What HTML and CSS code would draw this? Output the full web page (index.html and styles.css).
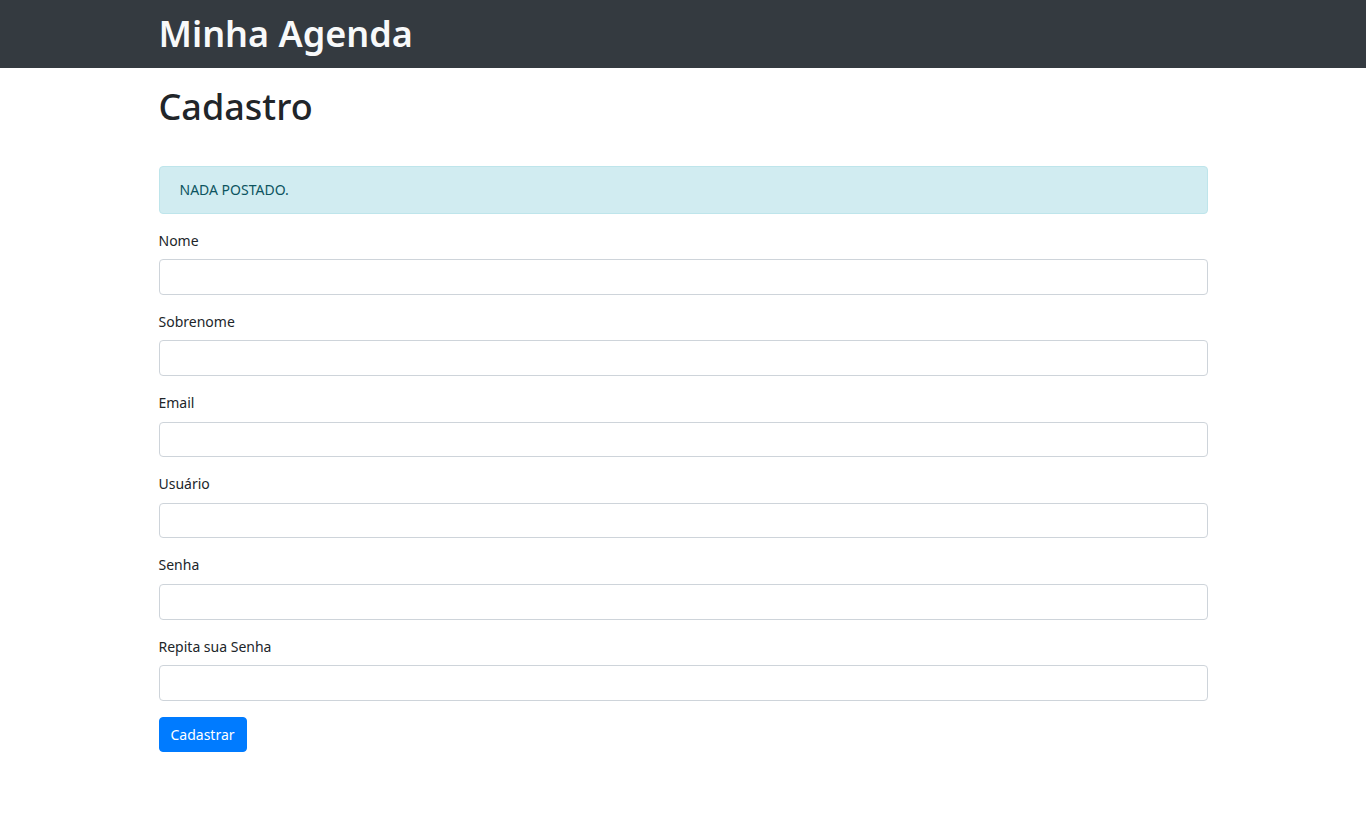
FILE: index.html
```html
<!DOCTYPE html>
<html lang="pt-BR">
<head>
<meta charset="utf-8">
<title>Minha Agenda</title>
<link rel="stylesheet" href="styles.css">
</head>
<body>
<nav class="navbar">
  <div class="container">
    <a class="brand" href="#">Minha Agenda</a>
  </div>
</nav>
<main class="container">
  <h1 class="page-title">Cadastro</h1>
  <div class="alert">NADA POSTADO.</div>
  <form class="form">
    <div class="form-group">
      <label for="nome">Nome</label>
      <input type="text" id="nome" class="form-control">
    </div>
    <div class="form-group">
      <label for="sobrenome">Sobrenome</label>
      <input type="text" id="sobrenome" class="form-control">
    </div>
    <div class="form-group">
      <label for="email">Email</label>
      <input type="email" id="email" class="form-control">
    </div>
    <div class="form-group">
      <label for="usuario">Usuário</label>
      <input type="text" id="usuario" class="form-control">
    </div>
    <div class="form-group">
      <label for="senha">Senha</label>
      <input type="password" id="senha" class="form-control">
    </div>
    <div class="form-group">
      <label for="senha2">Repita sua Senha</label>
      <input type="password" id="senha2" class="form-control">
    </div>
    <button type="submit" class="btn">Cadastrar</button>
  </form>
</main>
</body>
</html>
```
FILE: styles.css
```css
* { box-sizing: border-box; }
html, body { margin: 0; padding: 0; }
body {
  font-family: "Noto Sans", "Open Sans", sans-serif;
  font-size: 14px;
  line-height: 21.6px;
  color: #212529;
  background: #fff;
}
.container {
  width: 1049px;
  margin: 0 auto;
}
.navbar {
  background: #343a40;
  height: 68px;
  display: flex;
  align-items: center;
}
.brand {
  display: block;
  color: #f8f9fa;
  text-decoration: none;
  font-size: 36px;
  font-weight: 600;
  line-height: 43px;
  margin-top: -2px;
}
.page-title {
  font-size: 36px;
  font-weight: 500;
  line-height: 43px;
  margin: 17px 0 38px;
}
.alert {
  background: #d1ecf1;
  border: 1px solid #bee5eb;
  color: #0c5460;
  border-radius: 4px;
  padding: 12px 20px;
  margin-bottom: 16px;
}
.form-group {
  margin-bottom: 16px;
}
.form-group label {
  display: block;
  margin-bottom: 8px;
}
.form-control {
  display: block;
  width: 100%;
  height: 35.6px;
  padding: 6px 12px;
  font: inherit;
  color: #495057;
  background: #fff;
  border: 1px solid #ced4da;
  border-radius: 4px;
}
.btn {
  display: inline-block;
  font: inherit;
  color: #fff;
  background: #007bff;
  border: 1px solid #007bff;
  border-radius: 4px;
  padding: 6px 11px;
  height: 35.6px;
}
```
